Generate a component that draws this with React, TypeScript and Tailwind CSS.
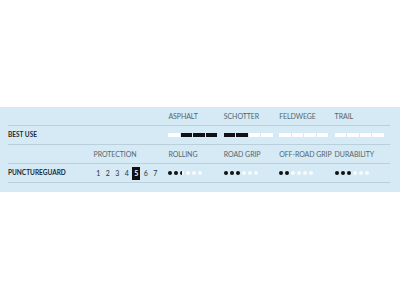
import React from 'react';

const uses = [
  { label: 'ASPHALT', value: 3, fromRight: true },
  { label: 'SCHOTTER', value: 2, fromRight: false },
  { label: 'FELDWEGE', value: 0, fromRight: false },
  { label: 'TRAIL', value: 0, fromRight: false },
];

const ratings = [
  { label: 'ROLLING', value: 2.5 },
  { label: 'ROAD GRIP', value: 3 },
  { label: 'OFF-ROAD GRIP', value: 2 },
  { label: 'DURABILITY', value: 3 },
];

function Bar({ value, fromRight }: { value: number; fromRight: boolean }) {
  return (
    <div className="flex gap-px">
      {[0, 1, 2, 3].map(i => {
        const on = fromRight ? i >= 4 - value : i < value;
        return <span key={i} className={`h-[4px] w-[11.5px] ${on ? 'bg-[#111]' : 'bg-white'}`} />;
      })}
    </div>
  );
}

function Dots({ value }: { value: number }) {
  return (
    <div className="flex gap-[2px]">
      {[0, 1, 2, 3, 4, 5].map(i => {
        let cls = 'bg-white/80';
        if (i + 1 <= value) cls = 'bg-[#111]';
        else if (i < value) cls = 'bg-[linear-gradient(90deg,#111_50%,#f5fafc_50%)]';
        return <span key={i} className={`size-[4px] rounded-full ${cls}`} />;
      })}
    </div>
  );
}

function Row({ children }: { children: React.ReactNode }) {
  return <div className="flex h-[19px] items-center border-b border-[#b9d0dc]">{children}</div>;
}

export default function App() {
  return (
    <div className="h-[300px] w-[400px] bg-white pt-[107px] font-['Lato',sans-serif] text-[7px]">
      <div className="h-[85px] bg-[#d5eaf4] pl-[8px] pr-[10px]">
        <Row>
          <div className="w-[165px]" />
          {uses.map(u => (
            <div key={u.label} className="w-[57px] tracking-[-0.01em] text-[#56656f]">{u.label}</div>
          ))}
        </Row>
        <Row>
          <div className="w-[165px] text-[6.5px] font-bold text-[#1b2a35]">BEST USE</div>
          {uses.map(u => (
            <div key={u.label} className="w-[57px]">
              <Bar value={u.value} fromRight={u.fromRight} />
            </div>
          ))}
        </Row>
        <Row>
          <div className="w-[88px]" />
          <div className="w-[77px] tracking-[-0.01em] text-[#56656f]">PROTECTION</div>
          {ratings.map(r => (
            <div key={r.label} className="w-[57px] tracking-[-0.01em] text-[#56656f]">{r.label}</div>
          ))}
        </Row>
        <Row>
          <div className="w-[88px] text-[6.5px] font-bold text-[#1b2a35]">PUNCTUREGUARD</div>
          <div className="flex w-[77px] items-center text-[#27343d]">
            {[1, 2, 3, 4, 5, 6, 7].map(n => (
              <span key={n} className="flex w-[9.5px] justify-center">
                {n === 5 ? (
                  <span className="flex h-[13px] w-[8px] items-center justify-center bg-[#111] font-bold text-white">5</span>
                ) : (
                  n
                )}
              </span>
            ))}
          </div>
          {ratings.map(r => (
            <div key={r.label} className="w-[57px]">
              <Dots value={r.value} />
            </div>
          ))}
        </Row>
      </div>
    </div>
  );
}
